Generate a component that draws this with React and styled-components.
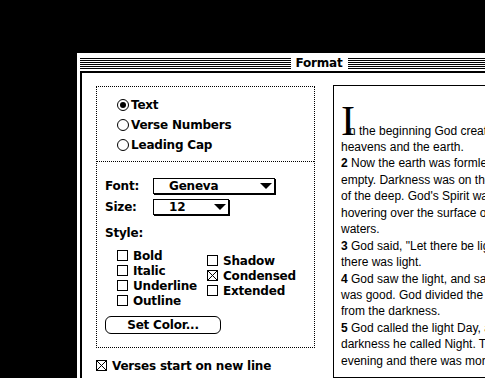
import React from "react";
import styled, { createGlobalStyle } from "styled-components";

const Global = createGlobalStyle`
  html, body { margin: 0; padding: 0; background: #000; overflow: hidden; }
  #root { width: 485px; height: 378px; overflow: hidden; }
`;

const Screen = styled.div`
  width: 485px;
  height: 378px;
  box-sizing: border-box;
  padding: 53px 0 0 77px;
  background: #000;
  overflow: hidden;
  font-family: "DejaVu Sans", sans-serif;
  font-size: 12px;
  font-weight: bold;
  color: #000;
  letter-spacing: -0.2px;
`;

const Window = styled.div`
  width: 484px;
  height: 340px;
  box-sizing: border-box;
  padding: 0 3px;
  background: #fff;
`;

const TitleBar = styled.div`
  display: flex;
  height: 18px;
  box-sizing: border-box;
  padding-top: 5px;
`;

const Stripes = styled.div`
  flex: 1;
  height: 11px;
  background: repeating-linear-gradient(to bottom, #000 0 1px, #fff 1px 2px);
`;

const Title = styled.div`
  padding: 0 5px;
  height: 11px;
  line-height: 11px;
`;

const Frame = styled.div`
  border-top: 2px solid #000;
  border-left: 2px solid #000;
  display: flex;
  align-items: flex-start;
  padding: 12px 0 0 14px;
  height: 330px;
  box-sizing: border-box;
`;

const LeftColumn = styled.div`
  width: 219px;
  margin-top: 1px;
  flex-shrink: 0;
`;

const GroupBox = styled.div`
  width: 219px;
  height: 262px;
  box-sizing: border-box;
  border: 1px dotted #000;
  display: flex;
  flex-direction: column;
`;

const RadioSection = styled.div`
  height: 74px;
  box-sizing: border-box;
  padding: 8px 0 0 20px;
`;

const RadioRow = styled.div`
  display: flex;
  align-items: center;
  gap: 2px;
  height: 20px;
`;

const RadioCircle = styled.span`
  width: 12px;
  height: 12px;
  box-sizing: border-box;
  border: 1px solid #000;
  border-radius: 50%;
  display: flex;
  align-items: center;
  justify-content: center;
  &::after {
    content: "";
    width: 6px;
    height: 6px;
    border-radius: 50%;
    background: ${(p) => (p.$on ? "#000" : "transparent")};
  }
`;

const StyleSection = styled.div`
  flex: 1;
  border-top: 1px dotted #000;
  padding: 16px 0 0 8px;
`;

const FieldRow = styled.div`
  display: flex;
  align-items: center;
  height: 16px;
  margin-top: ${(p) => p.$mt || 0}px;
`;

const FieldLabel = styled.span`
  width: 48px;
  line-height: 16px;
`;

const Popup = styled.div`
  width: ${(p) => p.$w}px;
  height: 16px;
  box-sizing: border-box;
  border: 1px solid #000;
  box-shadow: 1px 1px 0 #000;
  display: flex;
  align-items: center;
  justify-content: space-between;
  padding: 0 2px 0 15px;
  line-height: 14px;
`;

const Triangle = styled.span`
  width: 0;
  height: 0;
  border-left: 6px solid transparent;
  border-right: 6px solid transparent;
  border-top: 6px solid #000;
`;

const StyleLabel = styled.div`
  margin-top: 10px;
  line-height: 16px;
`;

const CheckGrid = styled.div`
  display: flex;
  margin-top: 7px;
  padding-left: 12px;
`;

const CheckColumn = styled.div`
  width: ${(p) => p.$w || "auto"};
  margin-top: ${(p) => p.$mt || 0}px;
  display: flex;
  flex-direction: column;
`;

const CheckRow = styled.div`
  display: flex;
  align-items: center;
  gap: 5px;
  height: 15px;
  margin-top: ${(p) => p.$mt || 0}px;
  white-space: nowrap;
`;

const Box = styled.span`
  width: 11px;
  height: 11px;
  box-sizing: border-box;
  border: 1px solid #000;
  display: block;
  flex-shrink: 0;
  svg { display: block; }
`;

const Button = styled.div`
  margin-top: 8px;
  width: 116px;
  height: 18px;
  box-sizing: border-box;
  border: 1px solid #000;
  border-radius: 6px;
  display: flex;
  align-items: center;
  justify-content: center;
  line-height: 16px;
`;

const Preview = styled.div`
  margin-left: 18px;
  width: 240px;
  height: 293px;
  flex-shrink: 0;
  box-sizing: border-box;
  border: 1px solid #000;
  padding: 35px 0 0 7px;
  overflow: hidden;
  white-space: nowrap;
  font-family: "Liberation Sans", Arial, sans-serif;
  font-weight: normal;
  font-size: 12px;
  letter-spacing: 0;
`;

const FirstLine = styled.div`
  line-height: 18px;
  height: 18px;
`;

const DropCap = styled.span`
  font-family: "Liberation Serif", "Times New Roman", serif;
  font-size: 42px;
  line-height: 0;
  letter-spacing: -6px;
`;

const Line = styled.div`
  line-height: 16.45px;
  height: 16.45px;
  b { font-weight: bold; }
`;

function Check({ on }) {
  return (
    <Box>
      {on && (
        <svg width="9" height="9" viewBox="0 0 9 9">
          <path d="M0 0L9 9M9 0L0 9" stroke="#000" strokeWidth="1" />
        </svg>
      )}
    </Box>
  );
}

const radios = [
  { label: "Text", on: true },
  { label: "Verse Numbers", on: false },
  { label: "Leading Cap", on: false },
];

const verses = [
  [null, "heavens and the earth."],
  ["2", " Now the earth was formless and"],
  [null, "empty. Darkness was on the surface"],
  [null, "of the deep. God's Spirit was"],
  [null, "hovering over the surface of the"],
  [null, "waters."],
  ["3", " God said, \"Let there be light,\" and"],
  [null, "there was light."],
  ["4", " God saw the light, and saw that it"],
  [null, "was good. God divided the light"],
  [null, "from the darkness."],
  ["5", " God called the light Day, and the"],
  [null, "darkness he called Night. There was"],
  [null, "evening and there was morning, one day."],
];

export default function App() {
  return (
    <>
      <Global />
      <Screen>
        <Window>
          <TitleBar>
            <Stripes />
            <Title>Format</Title>
            <Stripes />
          </TitleBar>
          <Frame>
            <LeftColumn>
              <GroupBox>
                <RadioSection>
                  {radios.map((r) => (
                    <RadioRow key={r.label}>
                      <RadioCircle $on={r.on} />
                      <span>{r.label}</span>
                    </RadioRow>
                  ))}
                </RadioSection>
                <StyleSection>
                  <FieldRow>
                    <FieldLabel>Font:</FieldLabel>
                    <Popup $w={122}>
                      <span>Geneva</span>
                      <Triangle />
                    </Popup>
                  </FieldRow>
                  <FieldRow $mt={5}>
                    <FieldLabel>Size:</FieldLabel>
                    <Popup $w={76}>
                      <span>12</span>
                      <Triangle />
                    </Popup>
                  </FieldRow>
                  <StyleLabel>Style:</StyleLabel>
                  <CheckGrid>
                    <CheckColumn $w="90px">
                      {["Bold", "Italic", "Underline", "Outline"].map((s) => (
                        <CheckRow key={s}>
                          <Check />
                          <span>{s}</span>
                        </CheckRow>
                      ))}
                    </CheckColumn>
                    <CheckColumn $mt={5}>
                      {[
                        ["Shadow", false],
                        ["Condensed", true],
                        ["Extended", false],
                      ].map(([s, on]) => (
                        <CheckRow key={s}>
                          <Check on={on} />
                          <span>{s}</span>
                        </CheckRow>
                      ))}
                    </CheckColumn>
                  </CheckGrid>
                  <Button>Set Color...</Button>
                </StyleSection>
              </GroupBox>
              <CheckRow $mt={10}>
                <Check on />
                <span>Verses start on new line</span>
              </CheckRow>
            </LeftColumn>
            <Preview>
              <FirstLine>
                <DropCap>I</DropCap>n the beginning God created the
              </FirstLine>
              {verses.map(([num, text], i) => (
                <Line key={i}>
                  {num && <b>{num}</b>}
                  {text}
                </Line>
              ))}
            </Preview>
          </Frame>
        </Window>
      </Screen>
    </>
  );
}
